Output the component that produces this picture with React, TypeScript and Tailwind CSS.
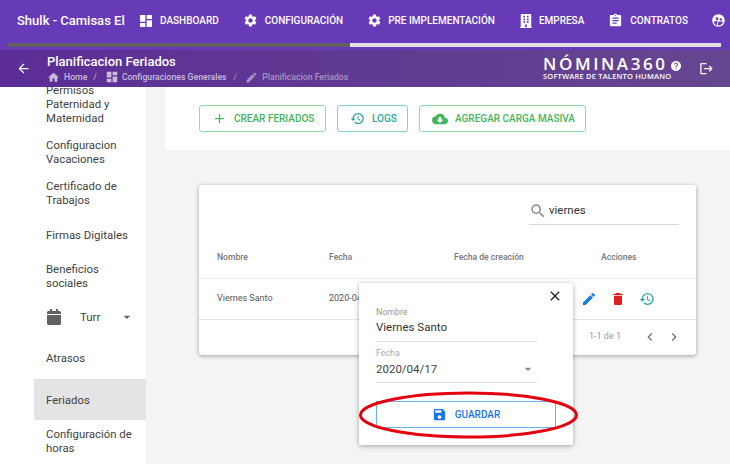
import { FaBuilding, FaCalendar } from 'react-icons/fa';
import {
  MdAdd, MdArrowBack, MdArrowDropDown, MdAssignment, MdChevronLeft, MdChevronRight, MdClose, MdCloudDownload,
  MdDashboard, MdDelete, MdEdit, MdLogout, MdHelp, MdHistory, MdHome, MdSupervisedUserCircle, MdSave, MdSearch, MdSettings,
} from 'react-icons/md';

const NAV = [
  { label: 'DASHBOARD', Icon: MdDashboard, size: 16, w: 'w-[22px]', cls: 'ml-[0px]' },
  { label: 'CONFIGURACIÓN', Icon: MdSettings, size: 15, w: 'w-[22px]', cls: 'ml-[24px]' },
  { label: 'PRE IMPLEMENTACIÓN', Icon: MdSettings, size: 15, w: 'w-[21px]', cls: 'ml-[24px]' },
  { label: 'EMPRESA', Icon: FaBuilding, size: 14, w: 'w-[20px]', cls: 'ml-[24px]' },
  { label: 'CONTRATOS', Icon: MdAssignment, size: 15, w: 'w-[22px]', cls: 'ml-[24px]' },
];

const SIDE_TOP = [
  { text: ['Paternidad y', 'Maternidad'], cls: 'mt-0' },
  { text: ['Configuracion', 'Vacaciones'], cls: 'mt-[13px]' },
  { text: ['Certificado de', 'Trabajos'], cls: 'mt-[13px]' },
  { text: ['Firmas Digitales'], cls: 'mt-[21px]' },
  { text: ['Beneficios', 'sociales'], cls: 'mt-[20px]' },
];

export default function App() {
  return (
    <div className="relative w-[730px] h-[464px] overflow-hidden bg-[#f4f4f4] font-['Roboto',sans-serif]">
      {/* top nav */}
      <div className="h-[50px] bg-[#673ab7] text-white">
        <div className="h-[41px] flex items-center pl-[17px] whitespace-nowrap overflow-hidden">
          <span className="w-[112px] shrink-0 text-[13px] font-medium">Shulk - Camisas El</span>
          <div className="ml-[9px] flex items-center">
            {NAV.map(({ label, Icon, size, w, cls }) => (
              <div key={label} className={`flex items-center shrink-0 ${cls}`}>
                <span className={`${w} flex`}><Icon size={size} /></span>
                <span className="text-[10px] font-medium">{label}</span>
              </div>
            ))}
            <div className="ml-[23px] shrink-0"><MdSupervisedUserCircle size={15} /></div>
          </div>
        </div>
        <div className="h-[4px] mt-[2px] ml-[8px] w-[713px] flex">
          <div className="w-[342px] bg-[#616161]" />
          <div className="flex-1 bg-[#e0e0e0]" />
        </div>
      </div>

      {/* sub header */}
      <div className="h-[37px] flex items-center bg-gradient-to-r from-[#5b2c96] to-[#66468f] text-white">
        <MdArrowBack size={15} className="ml-[16px]" />
        <div className="ml-[16px]">
          <div className="text-[13px] leading-[17px] font-medium">Planificacion Feriados</div>
          <div className="flex items-center text-[8.7px] leading-[12px] font-medium text-[#c9bcdc]">
            <MdHome size={13} />
            <span className="ml-[4px]">Home</span>
            <span className="ml-[6px] mr-[8px] font-normal">/</span>
            <MdDashboard size={14} />
            <span className="ml-[3px]">Configuraciones Generales</span>
            <span className="ml-[7px] mr-[8px] font-normal text-[#a794c4]">/</span>
            <MdEdit size={13} className="text-[#a794c4]" />
            <span className="ml-[4px] text-[#a794c4]">Planificacion Feriados</span>
          </div>
        </div>
        <div className="ml-auto relative w-[147px] h-[26px] mr-[9px] mt-[1px]">
          <div className="text-[17px] leading-[16px] tracking-[2.6px] font-semibold font-['Open_Sans',sans-serif] whitespace-nowrap">NÓMINA360</div>
          <div className="text-[7.5px] leading-[8px] font-semibold tracking-[0.2px] font-['Open_Sans',sans-serif] whitespace-nowrap">SOFTWARE DE TALENTO HUMANO</div>
          <MdHelp size={12} className="absolute right-[8px] top-[4px]" />
        </div>
        <MdLogout size={15} className="mr-[16px]" />
      </div>

      <div className="flex h-[377px]">
        {/* sidebar */}
        <div className="w-[146px] shrink-0 bg-white overflow-hidden text-[11.4px] leading-[14px] text-[#424242]">
          <div className="pl-[46px] -mt-[4px] pt-0">
            <div>Permisos</div>
            {SIDE_TOP.map((item) => (
              <div key={item.text[0]} className={item.cls}>
                {item.text.map((line) => <div key={line}>{line}</div>)}
              </div>
            ))}
            <div className="mt-[15px] h-[24px] flex items-center">
              <FaCalendar size={16} className="text-[#616161]" />
              <span className="ml-[18px] w-[39px]">Turr</span>
              <MdArrowDropDown size={16} className="text-[#616161]" />
            </div>
          </div>
          <div className="pl-[46px] mt-[22px]">Atrasos</div>
          <div className="ml-[34px] mt-[14px] h-[41px] pl-[12px] flex items-center bg-[#e4e4e4]">Feriados</div>
          <div className="pl-[46px] mt-[7px]">
            <div>Configuración de</div>
            <div>horas</div>
          </div>
        </div>

        {/* content */}
        <div className="flex-1 pl-[19px]">
          <div className="h-[63px] bg-white pl-[34px] pt-[18px] flex gap-[11px] items-start text-[10px] font-medium whitespace-nowrap">
            <button className="h-[27px] w-[127px] flex items-center pl-[12px] border border-[#8fdca6] rounded-[3px] text-[#43b65c]">
              <MdAdd size={15} />
              <span className="ml-[7px]">CREAR FERIADOS</span>
            </button>
            <button className="h-[27px] w-[71px] flex items-center pl-[12px] border border-[#86d0cb] rounded-[3px] text-[#2aa79b]">
              <MdHistory size={15} />
              <span className="ml-[7px]">LOGS</span>
            </button>
            <button className="h-[27px] w-[167px] flex items-center pl-[12px] border border-[#8fdca6] rounded-[3px] text-[#43b65c]">
              <MdCloudDownload size={16} />
              <span className="ml-[7px]">AGREGAR CARGA MASIVA</span>
            </button>
          </div>

          {/* table card */}
          <div className="ml-[34px] mt-[35px] w-[497px] h-[170px] bg-white rounded-[3px] shadow-[0_1px_4px_rgba(0,0,0,0.35)]">
            <div className="h-[39px] pt-[14px] flex justify-end pr-[17px]">
              <div className="w-[150px] h-[26px] flex items-center border-b border-[#d8d8d8] pb-[2px]">
                <MdSearch size={18} className="text-[#8a8a8a]" />
                <span className="ml-[2px] text-[11.5px] text-[#333]">viernes</span>
              </div>
            </div>
            <div className="h-[55px] pt-[27px] flex border-b border-[#ececec] text-[8.6px] leading-[12px] font-medium text-[#777]">
              <div className="pl-[18px] w-[130px]">Nombre</div>
              <div className="w-[125px]">Fecha</div>
              <div className="w-[147px]">Fecha de creación</div>
              <div>Acciones</div>
            </div>
            <div className="h-[41px] flex items-center border-b border-[#e4e4e4] text-[9px] text-[#555]">
              <div className="pl-[18px] w-[130px]">Viernes Santo</div>
              <div>2020-04-17</div>
              <div className="ml-auto flex items-center gap-[13px] mr-[40px] -translate-x-[1px]">
                <MdEdit size={16} className="text-[#1976e2]" />
                <MdDelete size={16} className="text-[#e02020]" />
                <MdHistory size={16} className="text-[#26a69a]" />
              </div>
            </div>
            <div className="h-[34px] flex items-center justify-end pr-[14px] text-[9px] text-[#999]">
              <span className="mr-[21px]">1-1 de 1</span>
              <MdChevronLeft size={16} className="text-[#777]" />
              <MdChevronRight size={16} className="ml-[8px] text-[#777]" />
            </div>
          </div>
        </div>
      </div>

      {/* popover */}
      <div className="absolute left-[359px] top-[283px] w-[214px] h-[162px] bg-white rounded-[2px] shadow-[0_1px_5px_rgba(0,0,0,0.35)] pl-[17px] pt-[23px]">
        <MdClose size={16} className="absolute right-[10px] top-[5px] text-[#222]" />
        <div className="w-[161px] h-[36px] border-b border-[#dcdcdc]">
          <div className="text-[8.8px] leading-[12px] text-[#999]">Nombre</div>
          <div className="text-[11.5px] leading-[18px] text-[#333]">Viernes Santo</div>
        </div>
        <div className="w-[161px] h-[36px] mt-[5px] border-b border-[#dcdcdc] relative">
          <div className="text-[8.8px] leading-[12px] text-[#aaa]">Fecha</div>
          <div className="text-[11.5px] leading-[18px] mt-[1px] text-[#444]">2020/04/17</div>
          <MdArrowDropDown size={16} className="absolute right-[1px] top-[14px] text-[#888]" />
        </div>
        <button className="mt-[18px] w-[180px] h-[27px] flex items-center justify-center border border-[#64b5f6] text-[#1976e2] text-[10px] font-medium">
          <MdSave size={15} />
          <span className="ml-[8px]">GUARDAR</span>
        </button>
      </div>

      {/* red annotation */}
      <svg className="absolute left-[358px] top-[390px]" width="222" height="50" viewBox="0 0 222 50" fill="none">
        <ellipse cx="110.5" cy="25" rx="108" ry="22" stroke="#e3000f" strokeWidth="3" />
      </svg>
    </div>
  );
}
